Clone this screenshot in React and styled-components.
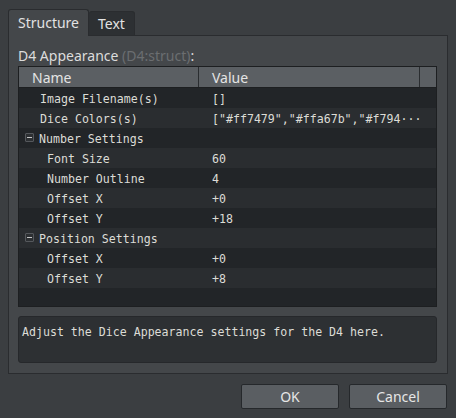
import React from 'react';
import styled, { createGlobalStyle } from 'styled-components';

const GlobalStyle = createGlobalStyle`
  html, body {
    margin: 0;
    padding: 0;
    background: #3b3e41;
  }
  * { box-sizing: border-box; }
`;

const rows = [
  { name: 'Image Filename(s)', value: '[]', level: 0 },
  { name: 'Dice Colors(s)', value: '["#ff7479","#ffa67b","#f794\u00b7\u00b7\u00b7', level: 0 },
  { name: 'Number Settings', value: '', level: 0, group: true },
  { name: 'Font Size', value: '60', level: 1 },
  { name: 'Number Outline', value: '4', level: 1 },
  { name: 'Offset X', value: '+0', level: 1 },
  { name: 'Offset Y', value: '+18', level: 1 },
  { name: 'Position Settings', value: '', level: 0, group: true },
  { name: 'Offset X', value: '+0', level: 1 },
  { name: 'Offset Y', value: '+8', level: 1 },
];

const App = () => {
  return (
    <Dialog>
      <GlobalStyle />
      <TabBar>
        <Tab active>Structure</Tab>
        <Tab>Text</Tab>
      </TabBar>
      <Panel>
        <Label>
          D4 Appearance <Hint>(D4:struct)</Hint>:
        </Label>
        <Table>
          <HeaderRow>
            <HeaderCell>Name</HeaderCell>
            <HeaderCell>Value</HeaderCell>
            <HeaderCorner />
          </HeaderRow>
          <Body>
            {rows.map((row, i) => (
              <Row key={i} odd={i % 2 === 1}>
                <NameCell level={row.level} group={row.group}>
                  {row.group && <Toggle />}
                  {row.name}
                </NameCell>
                <ValueCell>{row.value}</ValueCell>
              </Row>
            ))}
          </Body>
        </Table>
        <Description>Adjust the Dice Appearance settings for the D4 here.</Description>
      </Panel>
      <ButtonRow>
        <Button>OK</Button>
        <Button>Cancel</Button>
      </ButtonRow>
    </Dialog>
  );
};

const sans = `"Noto Sans", "DejaVu Sans", sans-serif`;
const mono = `"DejaVu Sans Mono", "Liberation Mono", monospace`;

const Dialog = styled.div`
  width: 456px;
  height: 418px;
  padding: 9px 8px 0 8px;
  display: flex;
  flex-direction: column;
  background: #3b3e41;
  color: #dadada;
  font-family: ${sans};
`;

const TabBar = styled.div`
  display: flex;
  align-items: flex-end;
  height: 27px;
  margin-bottom: -1px;
  position: relative;
  z-index: 1;
`;

const Tab = styled.div`
  height: ${p => (p.active ? '27px' : '25px')};
  padding: 0 9px ${p => (p.active ? '1px' : '0')};
  display: flex;
  align-items: center;
  font-size: 14px;
  color: #e2e2e2;
  background: ${p => (p.active ? '#44474a' : '#2d3033')};
  border: 1px solid #2a2c2f;
  border-bottom: ${p => (p.active ? 'none' : '1px solid #2a2c2f')};
  border-left: ${p => (p.active ? '1px solid #2a2c2f' : 'none')};
  border-radius: 3px 3px 0 0;
`;

const Panel = styled.div`
  height: 339px;
  width: 440px;
  background: #44474a;
  border: 1px solid #2a2c2f;
  padding: 0 10px 0 9px;
  display: flex;
  flex-direction: column;
`;

const Label = styled.div`
  height: 30px;
  display: flex;
  align-items: center;
  padding-top: 9px;
  font-size: 14px;
  color: #dcdcdc;
  white-space: pre;
`;

const Hint = styled.span`
  color: #6b6e71;
`;

const Table = styled.div`
  height: 241px;
  border: 1px solid #1d1f21;
  background: #222528;
  display: flex;
  flex-direction: column;
`;

const HeaderRow = styled.div`
  display: grid;
  grid-template-columns: 180px 1fr 16px;
  height: 21px;
  background: #5b5f63;
  border-bottom: 1px solid #1d1f21;
  flex: none;
`;

const HeaderCell = styled.div`
  display: flex;
  align-items: center;
  padding-left: 13px;
  font-size: 14px;
  color: #e4e4e4;
  border-right: 1px solid #2a2d30;
`;

const HeaderCorner = styled.div``;

const Body = styled.div`
  flex: 1;
  display: flex;
  flex-direction: column;
`;

const Row = styled.div`
  display: grid;
  grid-template-columns: 180px 1fr;
  height: 20px;
  flex: none;
  background: ${p => (p.odd ? '#2a2d30' : '#222528')};
  font-family: ${mono};
  font-size: 11.6px;
  color: #dcdcd6;
  white-space: pre;
`;

const NameCell = styled.div`
  display: flex;
  align-items: center;
  padding-top: 2px;
  padding-left: ${p => (p.group ? '6px' : p.level ? '28px' : '21px')};
`;

const ValueCell = styled.div`
  display: flex;
  align-items: center;
  padding-top: 2px;
  padding-left: 13px;
  overflow: hidden;
`;

const Toggle = styled.span`
  width: 9px;
  height: 9px;
  margin-right: 5px;
  margin-top: -3px;
  border: 1px solid #55585c;
  background: #2c2f32;
  border-radius: 1px;
  position: relative;
  &::after {
    content: '';
    position: absolute;
    left: 1px;
    right: 1px;
    top: 3px;
    height: 1px;
    background: #c8c8c8;
  }
`;

const Description = styled.div`
  margin-top: 9px;
  height: 47px;
  border: 1px solid #26282b;
  border-radius: 3px;
  background: #2d3033;
  padding: 8px 3px;
  font-family: ${mono};
  font-size: 11.6px;
  color: #dcdcd6;
  white-space: pre;
`;

const ButtonRow = styled.div`
  display: flex;
  justify-content: flex-end;
  gap: 10px;
  margin-top: 10px;
  padding-right: 1px;
`;

const Button = styled.div`
  width: 98px;
  height: 25px;
  display: flex;
  align-items: center;
  justify-content: center;
  background: #5a5e62;
  border: 1px solid #25282b;
  border-radius: 2px;
  font-size: 14px;
  color: #e6e6e6;
`;

export default App;
